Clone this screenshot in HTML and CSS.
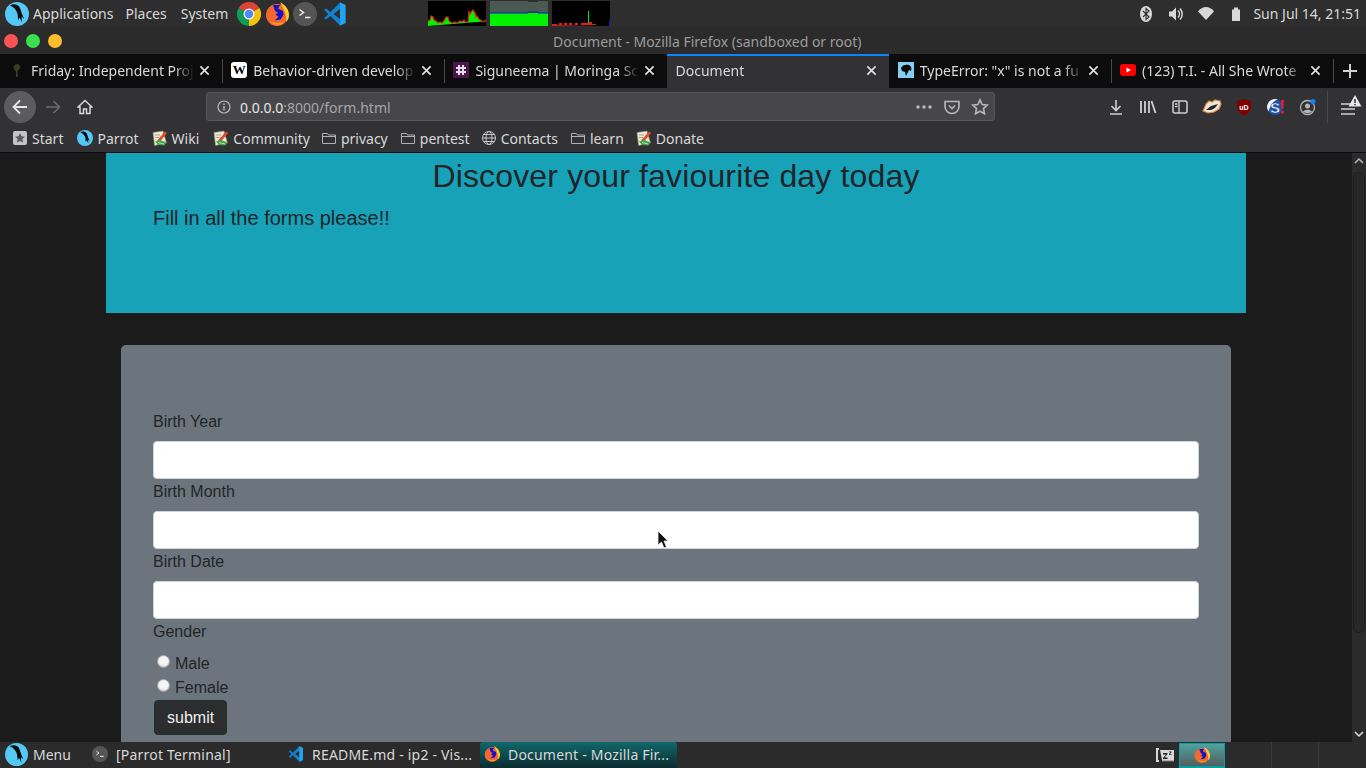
FILE: index.html
```html
<!DOCTYPE html>
<html>
<head>
    <title>Document</title>
    <link rel="stylesheet" href="styles.css">
</head>
<body>
    <svg class="defs" width="0" height="0">
        <symbol id="i-parrot" viewBox="0 0 24 24">
            <circle cx="12" cy="12" r="12" fill="#55c9f6"/>
            <path d="M5 3.500C8 1.500 12 2 14 4.500c1.500 2 2 4.500 2.800 7l2.400 5.500-2.700-2.500.6 6-2.400-5-1.500 2.500-.6-6C11.500 8 9 5 5 3.500z" fill="#0b0b0b"/>
        </symbol>
        <symbol id="i-firefox" viewBox="0 0 24 24">
            <circle cx="12" cy="13" r="11" fill="#f4682d"/>
            <path d="M15 0c5 3 9 7 9 13 0 3-1 5-3 7 1-5 0-9-6-20z" fill="#ffce2e"/>
            <path d="M5 20c4 4 11 4 15 0-4 1.500-11 1.500-15 0z" fill="#f9a01b"/>
            <path d="M8 3h7l-2 3.500 5 2.500.5 4-3 4.500-6 1 4-3.500-3-2.500 2.500-2-3-1.500z" fill="#1212c8"/>
        </symbol>
        <symbol id="i-chrome" viewBox="0 0 24 24">
            <path d="M12 12L1.600 6A12 12 0 0 1 22.400 6z" fill="#db4437"/>
            <path d="M12 12L22.400 6A12 12 0 0 1 12 24z" fill="#f4c20d"/>
            <path d="M12 12L12 24A12 12 0 0 1 1.600 6z" fill="#0f9d58"/>
            <circle cx="12" cy="12" r="5.500" fill="#f2f2f2"/>
            <circle cx="12" cy="12" r="4.200" fill="#4b8bf5"/>
        </symbol>
        <symbol id="i-term" viewBox="0 0 24 24">
            <circle cx="12" cy="12" r="12" fill="#555"/>
            <path d="M6.500 7.500l4 3-4 3" fill="none" stroke="#eee" stroke-width="1.500"/>
            <path d="M12 15.500h5.500" stroke="#eee" stroke-width="1.500"/>
        </symbol>
        <symbol id="i-code" viewBox="0 0 24 24">
            <path fill-rule="evenodd" d="M17 .5L7.500 10 3 6.500 1 7.800 5.300 12 1 16.200 3 17.500 7.500 14 17 23.500l5.500-2.500V3zM17 7v10l-6.500-5z" fill="#0f82d2"/>
            <path fill-rule="evenodd" d="M17 .5l5.500 2.500v18L17 23.500z" fill="#23a3ee"/>
        </symbol>
        <symbol id="i-wiki" viewBox="0 0 16 16">
            <path d="M1 2.500l10-1.500 3.500 12-12 2.500z" fill="#ece8d6" stroke="#8f8a70" stroke-width=".6"/>
            <path d="M3 5h5M3 7.500h4" stroke="#a9a58e" stroke-width="1"/>
            <path d="M5 10.500L13 1.500l2.200 1.600L8 11.500z" fill="#d8502f"/>
            <path d="M3 11.500l5-1.500 6.500 2.500-2 3-6.500-.5z" fill="#3ea648"/>
            <path d="M6 12.500l6 1.500" stroke="#d9f0d0" stroke-width=".8"/>
        </symbol>
        <symbol id="i-folder" viewBox="0 0 16 16">
            <path d="M1.500 3.500h5l1 1.500h7v8.500h-13zM1.500 6.500h13" fill="none" stroke="#b1b1b3" stroke-width="1"/>
        </symbol>
        <symbol id="i-close" viewBox="0 0 12 12">
            <path d="M1.500 1.500l9 9M10.500 1.500l-9 9" stroke="#e6e6e6" stroke-width="1.700"/>
        </symbol>
    </svg>

    <div class="panel">
        <svg class="panel-logo"><use href="#i-parrot"/></svg>
        <span class="panel-menu first">Applications</span>
        <span class="panel-menu">Places</span>
        <span class="panel-menu">System</span>
        <div class="launchers">
            <svg class="launcher"><use href="#i-chrome"/></svg>
            <svg class="launcher"><use href="#i-firefox"/></svg>
            <svg class="launcher"><use href="#i-term"/></svg>
            <svg class="launcher"><use href="#i-code"/></svg>
        </div>
        <div class="graphs">
            <svg class="graph" viewBox="0 0 58 25">
                <path d="M0 25V20l2-1 1-4 2 1 1 3 2 1 2 2 2-1 2 1 2-2 2-4 2 0 1 4 3 2 3-1 2 1 3-2 2 1 2-2 1 2 3 0 1-11 1 3 2-3 1-1 2 3 1 4 1-1 2 3 3 2 2 1 2-2 2-2 1 3z" fill="#00f000"/>
                <path d="M0 20l2-1 1-4 2 1 1 3 2 1 2 2 2-1 2 1 2-2 2-4 2 0 1 4 3 2 3-1 2 1 3-2 2 1 2-2 1 2 3 0 1-11 1 3 2-3 1-1 2 3 1 4 1-1 2 3 3 2 2 1 2-2 2-2 1 3" fill="none" stroke="#e02020" stroke-width="1.200"/>
            </svg>
            <svg class="graph" viewBox="0 0 58 25">
                <rect width="58" height="25" fill="#4a5a52"/>
                <rect x="38" width="10" height="1" fill="#2e2e2e"/>
                <rect y="12" width="58" height="13" fill="#00f000"/>
                <path d="M0 12h38v-1h10v1h10" fill="none" stroke="#1414d0" stroke-width="1"/>
            </svg>
            <svg class="graph" viewBox="0 0 58 25">
                <path d="M0 25v-2h5v1h2v-2h3v2h2v-2h3v2h2v-2h3v2h3v-2h3v2h3v-2h8v-1h3v2h4v1z" fill="#e02020"/>
                <path d="M36 10h1v12h-1z" fill="#00f000"/>
                <path d="M57 19h1v6h-1z" fill="#1414d0"/>
            </svg>
        </div>
        <div class="tray">
            <svg class="tray-icon" viewBox="0 0 16 16"><ellipse cx="8" cy="8" rx="6" ry="8" fill="#d8d8d8"/><path d="M5 5l6 6-3 2.500v-11l3 2.500-6 6" fill="none" stroke="#2e2e2e" stroke-width="1.100"/></svg>
            <svg class="tray-icon" viewBox="0 0 16 16"><path d="M1 5.500h3l4-4v13l-4-4h-3z" fill="#d8d8d8"/><path d="M10 4.500a5 5 0 0 1 0 7M12 2.500a8 8 0 0 1 0 11" fill="none" stroke="#d8d8d8" stroke-width="1.500"/></svg>
            <svg class="tray-icon" viewBox="0 0 16 16"><path d="M0 5.500C4-.5 12-.5 16 5.500L8 14z" fill="#d8d8d8"/></svg>
            <svg class="tray-icon" viewBox="0 0 16 16"><path d="M6 1.500h4v2h2v11.500H4V3.500h2z" fill="#d8d8d8"/></svg>
            <span class="clock">Sun Jul 14, 21:51</span>
        </div>
    </div>

    <div class="titlebar">
        <div class="window-btns">
            <span class="window-btn close"></span>
            <span class="window-btn max"></span>
            <span class="window-btn min"></span>
        </div>
        <span class="window-title">Document - Mozilla Firefox (sandboxed or root)</span>
    </div>

    <div class="tabs">
        <div class="tab sep">
            <svg class="favicon" viewBox="0 0 16 16"><path d="M7 15h2l-.5-6 3-3-1-3-2-1-2 .5-2 2 .5 3 2 2z" fill="#3a3d22"/></svg>
            <span class="tab-title">Friday: Independent Proj</span>
            <svg class="tab-close"><use href="#i-close"/></svg>
        </div>
        <div class="tab sep">
            <span class="favicon fav-wiki">W</span>
            <span class="tab-title">Behavior-driven develop</span>
            <svg class="tab-close"><use href="#i-close"/></svg>
        </div>
        <div class="tab">
            <svg class="favicon" viewBox="0 0 16 16"><rect width="16" height="16" fill="#4a154b"/><path d="M6 3v10M10 3v10M3 6h10M3 10h10" stroke="#e8dbe8" stroke-width="2"/></svg>
            <span class="tab-title">Siguneema | Moringa Sc</span>
            <svg class="tab-close"><use href="#i-close"/></svg>
        </div>
        <div class="tab active">
            <span class="tab-title">Document</span>
            <svg class="tab-close"><use href="#i-close"/></svg>
        </div>
        <div class="tab sep">
            <svg class="favicon" viewBox="0 0 16 16"><rect width="16" height="16" fill="#83d0f2"/><path d="M3 6c1-3 5-4 8-3 2 1 3 3 2 6l-2-1-1 2-2 4-1-4-3-1z" fill="#0b0b0d"/></svg>
            <span class="tab-title">TypeError: "x" is not a fu</span>
            <svg class="tab-close"><use href="#i-close"/></svg>
        </div>
        <div class="tab sep">
            <svg class="favicon" viewBox="0 0 16 16"><rect y="2" width="16" height="12" rx="3" fill="#f00"/><path d="M6.500 5.500L11 8l-4.500 2.500z" fill="#fff"/></svg>
            <span class="tab-title">(123) T.I. - All She Wrote</span>
            <svg class="tab-close"><use href="#i-close"/></svg>
        </div>
        <div class="new-tab">
            <svg width="16" height="16" viewBox="0 0 16 16"><path d="M8 1v14M1 8h14" stroke="#d0d0d0" stroke-width="2"/></svg>
        </div>
    </div>

    <div class="navbar">
        <div class="back-btn">
            <svg width="18" height="18" viewBox="0 0 18 18"><path d="M16 9H2.500M9 2.500L2.500 9 9 15.500" fill="none" stroke="#e6e6e6" stroke-width="1.800"/></svg>
        </div>
        <div class="nav-btn">
            <svg width="18" height="18" viewBox="0 0 18 18"><path d="M2 9h13.500M9.500 3l6 6-6 6" fill="none" stroke="#6c6c6e" stroke-width="1.600"/></svg>
        </div>
        <div class="nav-btn">
            <svg width="16" height="16" viewBox="0 0 16 16"><path d="M1 8l7-6.500L15 8h-2v6.500H9.500V10h-3v4.500H3V8z" fill="none" stroke="#d8d8d8" stroke-width="1.500"/></svg>
        </div>
        <div class="urlbar">
            <svg class="url-info" width="14" height="14" viewBox="0 0 14 14"><circle cx="7" cy="7" r="6" fill="none" stroke="#b8b8b8" stroke-width="1.200"/><path d="M7 6v4.500M7 3.500v1.500" stroke="#b8b8b8" stroke-width="1.400"/></svg>
            <span class="url-text">0.0.0.0<span class="url-dim">:8000/form.html</span></span>
            <svg class="url-action" width="18" height="16" viewBox="0 0 18 16"><circle cx="3" cy="8" r="1.700" fill="#b8b8b8"/><circle cx="9" cy="8" r="1.700" fill="#b8b8b8"/><circle cx="15" cy="8" r="1.700" fill="#b8b8b8"/></svg>
            <svg class="url-action" width="16" height="16" viewBox="0 0 16 16"><path d="M1 2.500h14v5a7 7 0 0 1-14 0z" fill="none" stroke="#b8b8b8" stroke-width="1.600"/><path d="M5 6.500l3 3 3-3" fill="none" stroke="#b8b8b8" stroke-width="1.600"/></svg>
            <svg class="url-action" width="18" height="18" viewBox="0 0 18 18"><path d="M9 1.800l2.200 4.700 5 .6-3.700 3.500 1 5.100L9 13.200l-4.500 2.500 1-5.100L1.800 7.100l5-.6z" fill="none" stroke="#b8b8b8" stroke-width="1.600"/></svg>
        </div>
        <div class="toolbar">
            <div class="tool"><svg width="16" height="16" viewBox="0 0 16 16"><path d="M8 1v10M3.500 7L8 11.500 12.500 7M2 15h12" fill="none" stroke="#d0d0d0" stroke-width="1.600"/></svg></div>
            <div class="tool"><svg width="18" height="16" viewBox="0 0 18 16"><path d="M2 2v12M6 2v12M10 2v12M12.500 2l4 12" fill="none" stroke="#d0d0d0" stroke-width="1.800"/></svg></div>
            <div class="tool"><svg width="16" height="16" viewBox="0 0 16 16"><rect x="1" y="2" width="14" height="12" rx="2" fill="none" stroke="#d0d0d0" stroke-width="1.500"/><path d="M7 2v12M3 5h2.500M3 7.500h2.500" stroke="#d0d0d0" stroke-width="1.300"/></svg></div>
            <div class="tool"><svg width="20" height="16" viewBox="0 0 20 16"><path d="M1 12L4 5l3-3 3 1 3-2 5 1 1 3-2 5-5 3-6 1z" fill="#ece7dc" stroke="#d98a3d" stroke-width="1.200"/><path d="M4 11l5-4 7-2-3 4-4 2z" fill="#262626"/></svg></div>
            <div class="tool"><svg width="16" height="18" viewBox="0 0 16 18"><path d="M8 1l7 2v6c0 4-3 7-7 8.500C4 16 1 13 1 9V3z" fill="#800000"/><text x="8" y="11.500" class="ublock">uD</text></svg></div>
            <div class="tool"><svg width="18" height="18" viewBox="0 0 18 18"><circle cx="8" cy="9" r="8" fill="#1b4fa8"/><path d="M1.500 13.500A8 8 0 0 1 8 1a8 8 0 0 1 3 .6C6 3 3 8 1.500 13.500z" fill="#f4f4f4"/><text x="8" y="14.500" class="ext-s">S</text><path d="M14 2h3l-.6 9h-1.800z" fill="#ee1c25"/><rect x="14.200" y="13" width="2.600" height="2.600" fill="#ee1c25"/></svg></div>
            <div class="tool"><svg width="18" height="18" viewBox="0 0 18 18"><circle cx="8.500" cy="9.500" r="7" fill="none" stroke="#b4b4b4" stroke-width="1.300"/><circle cx="8.500" cy="8" r="2.500" fill="#b4b4b4"/><path d="M4 13.500c2-2.500 7-2.500 9 0-2 2-7 2-9 0z" fill="#b4b4b4"/><circle cx="14" cy="3.500" r="2.500" fill="#0a84ff"/></svg></div>
            <div class="toolbar-sep"></div>
            <div class="menu-btn">
                <svg width="24" height="24" viewBox="0 0 24 24"><path d="M3 10h14M3 15h14M3 20h14" stroke="#d0d0d0" stroke-width="1.700"/><path d="M17 1l6.500 11.500h-13z" fill="#e8e8e8"/><path d="M17 5v4M17 10v1.200" stroke="#323234" stroke-width="1.500"/></svg>
            </div>
        </div>
    </div>

    <div class="bookmarks">
        <div class="bookmark"><svg class="bm-icon" viewBox="0 0 16 16"><rect x="1" y="1" width="14" height="14" rx="2" fill="#c4c4c4"/><path d="M8 3l1.500 3.300 3.500.4-2.600 2.400.7 3.500L8 10.900l-3.100 1.700.7-3.500L3 6.700l3.500-.4z" fill="#5a5a5a"/></svg>Start</div>
        <div class="bookmark"><svg class="bm-icon"><use href="#i-parrot"/></svg>Parrot</div>
        <div class="bookmark"><svg class="bm-icon"><use href="#i-wiki"/></svg>Wiki</div>
        <div class="bookmark"><svg class="bm-icon"><use href="#i-wiki"/></svg>Community</div>
        <div class="bookmark"><svg class="bm-icon"><use href="#i-folder"/></svg>privacy</div>
        <div class="bookmark"><svg class="bm-icon"><use href="#i-folder"/></svg>pentest</div>
        <div class="bookmark"><svg class="bm-icon" viewBox="0 0 16 16"><g fill="none" stroke="#c8c8c8" stroke-width="1"><circle cx="8" cy="8" r="6.500"/><ellipse cx="8" cy="8" rx="3" ry="6.500"/><path d="M1.500 8h13M2.500 4.500h11M2.500 11.500h11"/></g></svg>Contacts</div>
        <div class="bookmark"><svg class="bm-icon"><use href="#i-folder"/></svg>learn</div>
        <div class="bookmark"><svg class="bm-icon"><use href="#i-wiki"/></svg>Donate</div>
    </div>

    <div class="viewport">
        <div class="page">
            <div class="container">
                <div class="jumbotron">
                    <h1>Discover your faviourite day today</h1>
                    <p>Fill in all the forms please!!</p>
                </div>
                <form class="birth-form">
                    <label class="field-label">Birth Year</label>
                    <input type="text" class="field">
                    <label class="field-label">Birth Month</label>
                    <input type="text" class="field">
                    <label class="field-label">Birth Date</label>
                    <input type="text" class="field">
                    <label class="field-label">Gender</label>
                    <label class="radio-row"><input type="radio" name="gender">Male</label>
                    <label class="radio-row"><input type="radio" name="gender">Female</label>
                    <button type="button" class="submit-btn">submit</button>
                </form>
            </div>
            <svg class="cursor" width="12" height="19" viewBox="0 0 12 19"><path d="M1 1v14l3.500-3 2.500 6 2.500-1-2.500-6H11z" fill="#111" stroke="#eee" stroke-width=".8"/></svg>
        </div>
        <div class="scrollbar">
            <svg width="14" height="17" viewBox="0 0 14 17"><path d="M3 10l4-4 4 4" fill="none" stroke="#bbb" stroke-width="1.500"/></svg>
            <div class="scroll-thumb"></div>
            <svg width="14" height="17" viewBox="0 0 14 17"><path d="M3 7l4 4 4-4" fill="none" stroke="#e0e0e0" stroke-width="1.500"/></svg>
        </div>
    </div>

    <div class="taskbar">
        <div class="task-menu"><svg class="task-logo"><use href="#i-parrot"/></svg>Menu</div>
        <div class="task term-task"><svg class="task-icon"><use href="#i-term"/></svg>[Parrot Terminal]</div>
        <div class="task code-task"><svg class="task-icon"><use href="#i-code"/></svg>README.md - ip2 - Vis...</div>
        <div class="task active"><svg class="task-icon"><use href="#i-firefox"/></svg>Document - Mozilla Fir...</div>
        <div class="task-tray">
            <svg class="sleep-icon" width="18" height="16" viewBox="0 0 18 16"><path d="M0 1h3v2h-1v10h1v2H0zM4 3h14v10l-1 2-1-2-1 2-1-2-1 2-1-2-1 2-1-2-1 2-1-2-1 2-1-2z" fill="#d8d8d8"/><path d="M7 6h4.500v1L8.500 10.500h3v1.500H7v-1L10 7.500H7z" fill="#222"/><path d="M13 4.500h2.500v.8L14 7h1.500v.7H13V7l1.500-1.700H13z" fill="#222"/></svg>
            <div class="desk-box"><svg class="task-icon"><use href="#i-firefox"/></svg></div>
            <div class="tray-cell"></div>
            <div class="tray-cell"></div>
        </div>
    </div>
</body>
</html>
```

FILE: styles.css
```css
* {
    box-sizing: border-box;
}
body {
    margin: 0;
    height: 768px;
    overflow: hidden;
    display: flex;
    flex-direction: column;
    background-color: #1b1b1b;
    font-family: "Noto Sans", sans-serif;
    font-size: 14px;
    color: #d8d8d8;
}
.defs {
    position: absolute;
}

/* top panel */
.panel {
    height: 27px;
    flex: none;
    display: flex;
    align-items: center;
    background-color: #2e2e2e;
    padding-left: 5px;
}
.panel-logo {
    width: 24px;
    height: 24px;
}
.panel-menu {
    margin-left: 14px;
}
.panel-menu.first {
    margin-left: 4px;
}
.panel-menu:nth-of-type(2) {
    margin-left: 12px;
}
.launchers {
    display: flex;
    align-items: center;
    gap: 4px;
    margin-left: 9px;
}
.launcher {
    width: 24px;
    height: 24px;
}
.launcher:last-child {
    margin-left: 2px;
}
.graphs {
    display: flex;
    gap: 4px;
    margin-left: 81px;
}
.graph {
    width: 58px;
    height: 25px;
    background-color: #000;
}
.tray {
    margin-left: auto;
    display: flex;
    align-items: center;
}
.tray-icon {
    width: 16px;
    height: 16px;
    margin-right: 14px;
}
.clock {
    margin-left: -5px;
    margin-right: 5px;
}

/* window title */
.titlebar {
    height: 27px;
    flex: none;
    display: flex;
    align-items: center;
    background-color: #2b2b2b;
}
.window-btns {
    display: flex;
    gap: 8px;
    padding-left: 4px;
}
.window-btn {
    width: 14px;
    height: 14px;
    border-radius: 50%;
}
.window-btn.close { background-color: #fc5454; }
.window-btn.max { background-color: #3ae04c; }
.window-btn.min { background-color: #ffbd2e; }
.window-title {
    margin-left: 491px;
    padding-top: 2px;
    color: #9c9c9c;
}

/* tabs */
.tabs {
    height: 34px;
    flex: none;
    display: flex;
    background-color: #0c0c0d;
}
.tab {
    width: 222.2px;
    display: flex;
    align-items: center;
    padding: 0 9px 2px;
}
.tab.sep {
    position: relative;
}
.tab.sep::after {
    content: "";
    position: absolute;
    right: -1px;
    top: 5px;
    bottom: 5px;
    width: 1px;
    background-color: #4a4a4c;
}
.tab.active {
    background-color: #323234;
    box-shadow: inset 0 2px 0 #0a84ff;
}
.favicon {
    width: 16px;
    height: 16px;
    flex: none;
    margin-right: 6px;
}
.fav-wiki {
    background-color: #fff;
    border-radius: 3px;
    color: #000;
    font-family: "Liberation Serif", serif;
    font-size: 13px;
    font-weight: bold;
    line-height: 16px;
    text-align: center;
}
.tab-title {
    flex: 1;
    min-width: 0;
    white-space: nowrap;
    overflow: hidden;
    -webkit-mask-image: linear-gradient(to right, #000 88%, transparent);
    mask-image: linear-gradient(to right, #000 88%, transparent);
}
.tab-close {
    flex: none;
    width: 11px;
    height: 11px;
    margin: 1px 3px 0 5px;
}
.new-tab {
    flex: 1;
    display: flex;
    align-items: center;
    justify-content: center;
}

/* nav bar */
.navbar {
    height: 37px;
    flex: none;
    display: flex;
    align-items: center;
    background-color: #323234;
    padding-left: 4px;
}
.back-btn {
    width: 32px;
    height: 32px;
    margin-right: 1px;
    border-radius: 50%;
    background-color: #5c5c5e;
    display: flex;
    align-items: center;
    justify-content: center;
}
.nav-btn {
    width: 32px;
    height: 32px;
    display: flex;
    align-items: center;
    justify-content: center;
}
.urlbar {
    width: 789px;
    height: 29px;
    margin-left: 105px;
    display: flex;
    align-items: center;
    gap: 11px;
    padding: 0 5px 0 10px;
    background-color: #474749;
    border: 1px solid #565658;
    border-radius: 3px;
}
.url-text {
    flex: 1;
    margin-left: -2px;
    padding-top: 1px;
    color: #e6e6e6;
}
.url-dim {
    color: #a6a6a8;
}
.toolbar {
    display: flex;
    align-items: center;
    margin-left: 105px;
}
.tool {
    width: 32px;
    height: 32px;
    display: flex;
    align-items: center;
    justify-content: center;
}
.ublock {
    font-family: "Liberation Sans", sans-serif;
    font-size: 7px;
    font-weight: bold;
    fill: #fff;
    text-anchor: middle;
}
.ext-s {
    font-family: "Liberation Sans", sans-serif;
    font-size: 15px;
    font-weight: bold;
    fill: #fff;
    stroke: #1b4fa8;
    stroke-width: .5px;
    text-anchor: middle;
}
.toolbar-sep {
    width: 1px;
    height: 32px;
    margin: 0 10px 0 3px;
    background-color: #4a4a4c;
}
.menu-btn {
    width: 24px;
    height: 24px;
    margin-top: -2px;
}

/* bookmarks */
.bookmarks {
    height: 28px;
    flex: none;
    display: flex;
    align-items: center;
    gap: 12px;
    padding: 0 0 1px 12px;
    background-color: #323234;
    border-bottom: 1px solid #0c0c0d;
}
.bookmark {
    display: flex;
    align-items: center;
    gap: 4px;
}
.bookmark:nth-child(1) { margin-right: 2px; }
.bookmark:nth-child(2) { margin-right: 1px; }
.bookmark:nth-child(3) { margin-right: 2px; }
.bookmark:nth-child(4) { margin-right: -1px; }
.bookmark:nth-child(6) { margin-right: -1px; }
.bm-icon {
    width: 16px;
    height: 16px;
    flex: none;
}

/* page */
.viewport {
    flex: 1;
    min-height: 0;
    display: flex;
}
.page {
    flex: 1;
    position: relative;
    overflow: hidden;
    font-family: "Liberation Sans", sans-serif;
    font-size: 16px;
    color: #212529;
}
.container {
    width: 1140px;
    margin: 0 auto;
}
.jumbotron {
    height: 160px;
    padding: 4px 47px;
    background-color: #17a2b8;
}
.jumbotron h1 {
    margin: 0 0 8px;
    font-size: 32px;
    font-weight: 400;
    line-height: 1.2;
    letter-spacing: .15px;
    text-align: center;
}
.jumbotron p {
    margin: 0;
    font-size: 20px;
    line-height: 30px;
}
.birth-form {
    margin: 32px 15px 0;
    padding: 64px 32px 32px;
    background-color: #6c757d;
    border-radius: 5px;
}
.field-label {
    display: block;
    padding-top: 1px;
    line-height: 23px;
    margin-bottom: 8px;
}
.field {
    display: block;
    width: 100%;
    height: 38px;
    background-color: #fff;
    border: 1px solid #ced4da;
    border-radius: 4px;
}
.radio-row {
    display: flex;
    padding-top: 1px;
    line-height: 23px;
}
.radio-row input {
    appearance: none;
    width: 13px;
    height: 13px;
    margin: 3px 5px 0 4px;
    border: 1px solid #a4a4a4;
    border-radius: 50%;
    background-color: #f4f4f4;
    box-shadow: inset 0 -1px 1px #c8c8c8;
}
.submit-btn {
    display: block;
    height: 35px;
    margin: 1px 0 0 1px;
    padding: 0 12px;
    background-color: #2b2d2e;
    border: 1px solid #1d2f30;
    border-radius: 4px;
    color: #f0f0f0;
    font-family: "Liberation Sans", sans-serif;
    font-size: 16px;
}
.cursor {
    position: absolute;
    left: 657px;
    top: 377px;
}
.scrollbar {
    width: 14px;
    flex: none;
    display: flex;
    flex-direction: column;
    align-items: center;
    background-color: #2b2b2b;
}
.scroll-thumb {
    width: 12px;
    height: 461px;
    margin: 2px 0 auto;
    background-color: #282828;
    border: 1px solid #1e1e1e;
    border-radius: 7px;
}

/* bottom task bar */
.taskbar {
    height: 26px;
    flex: none;
    display: flex;
    align-items: stretch;
    background-color: #2b2b2b;
}
.task-menu {
    width: 84px;
    display: flex;
    align-items: center;
    padding: 0 0 2px 5px;
    gap: 5px;
}
.task-logo {
    width: 23px;
    height: 23px;
}
.task {
    display: flex;
    align-items: center;
    white-space: nowrap;
    gap: 8px;
    padding: 0 0 2px 4px;
    letter-spacing: .2px;
}
.task-icon {
    width: 16px;
    height: 16px;
    flex: none;
}
.term-task {
    width: 196px;
    padding-left: 8px;
}
.code-task {
    width: 200px;
    padding-left: 8px;
}
.task.active {
    width: 197px;
    background: linear-gradient(#11686b, #0c2c30);
    border-radius: 3px 3px 0 0;
}
.task-tray {
    flex: 1;
    display: flex;
    align-items: center;
    padding-left: 479px;
}
.sleep-icon {
    flex: none;
    margin-right: 5px;
}
.desk-box {
    width: 46px;
    height: 25px;
    margin-top: 1px;
    display: flex;
    align-items: center;
    justify-content: center;
    background: linear-gradient(#4fa3a0, #555d5d);
    border: 1px solid #00a3a3;
    border-bottom-width: 2px;
}
.tray-cell {
    width: 47px;
    height: 100%;
    border-right: 1px solid #3a3a3a;
}
```
